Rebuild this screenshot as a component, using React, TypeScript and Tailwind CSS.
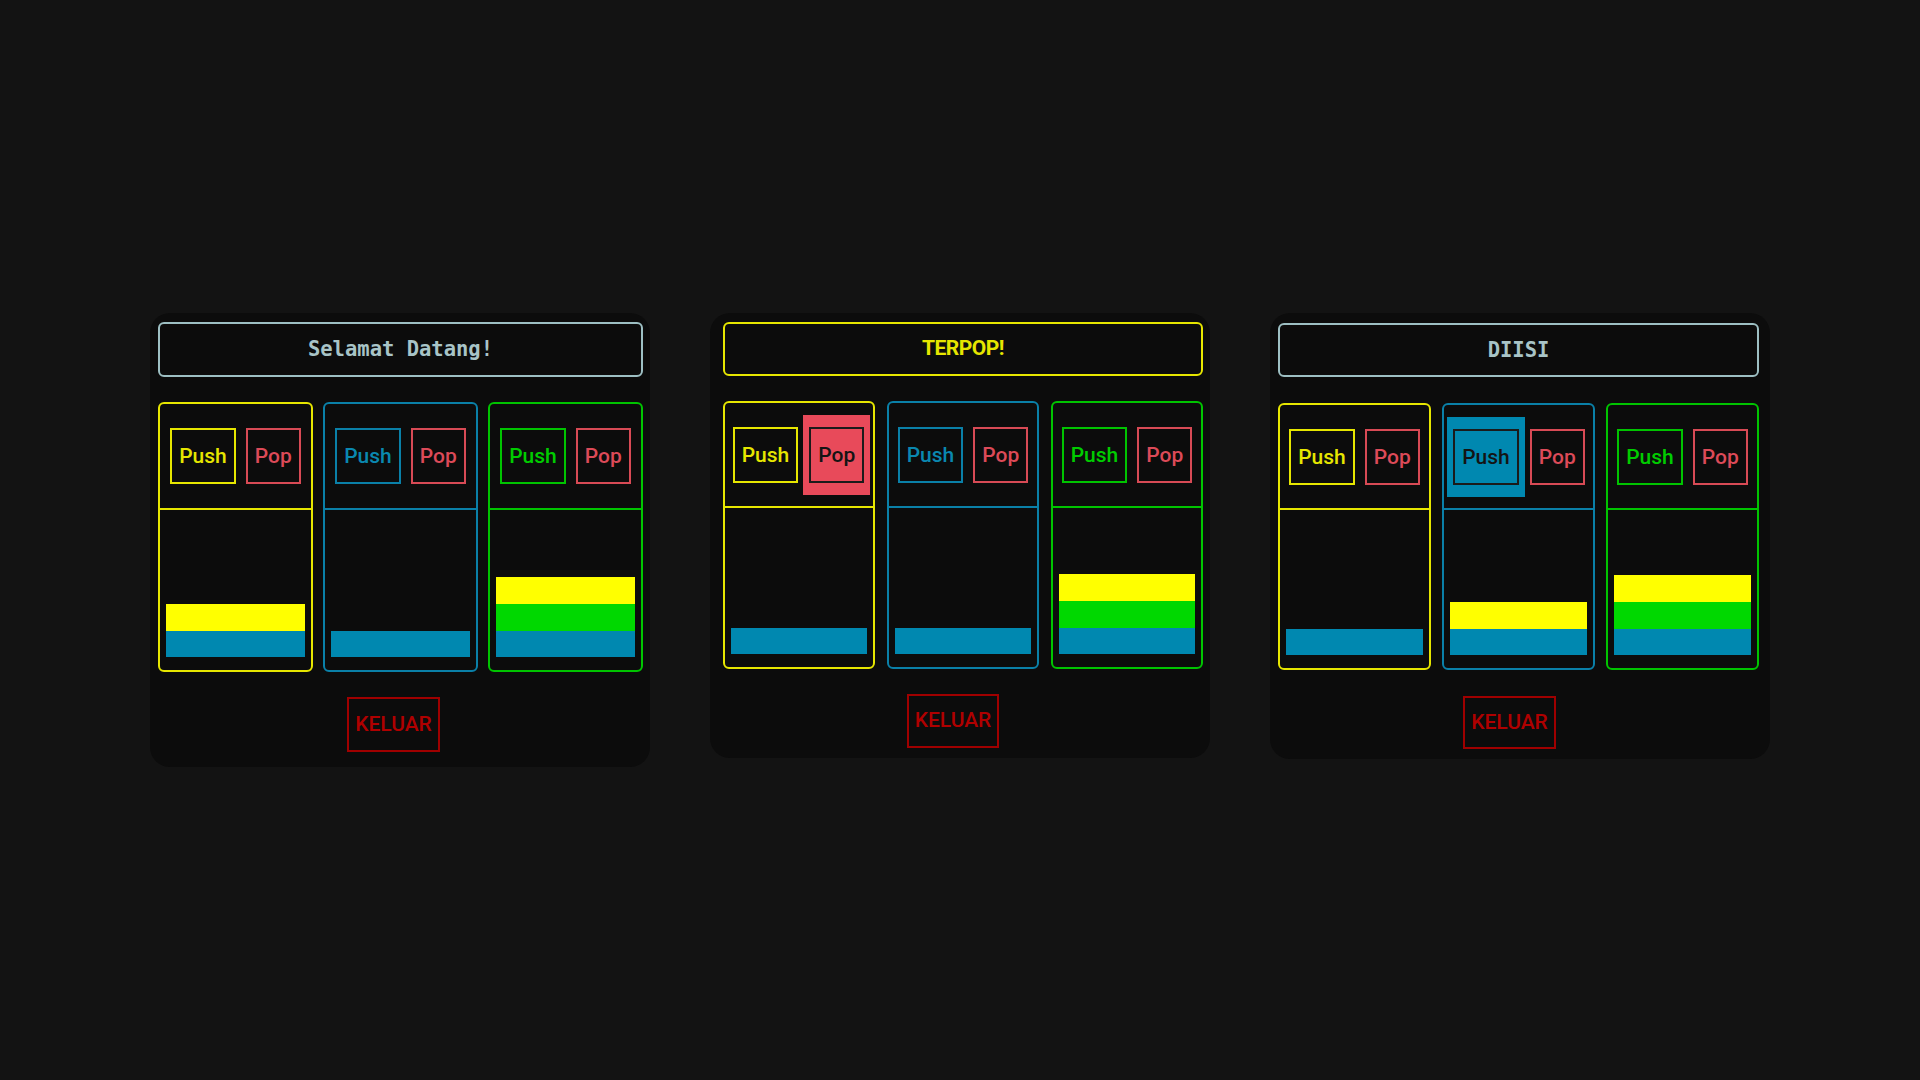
import React from "react";

type Tone = "yellow" | "blue" | "green";

type Column = {
  tone: Tone;
  stack: Tone[]; // top to bottom
  active?: "push" | "pop";
};

type Panel = {
  title: string;
  mono: boolean;
  cols: Column[];
  pad: string;
  top: string;
  width: string;
  gap: string;
  titleH: string;
  colsH: string;
  headH: string;
  btnRow: string;
};

const frame: Record<Tone, string> = {
  yellow: "border-[#e6e600]",
  blue: "border-[#0a80a8]",
  green: "border-[#00c400]",
};

const pushText: Record<Tone, string> = {
  yellow: "border-[#e6e600] text-[#e6e600]",
  blue: "border-[#0a80a8] text-[#0a88b0]",
  green: "border-[#00c400] text-[#00cc00]",
};

const activeBg: Record<Tone, string> = {
  yellow: "bg-[#e6e600]",
  blue: "bg-[#0088b0]",
  green: "bg-[#00c400]",
};

const block: Record<Tone, string> = {
  yellow: "bg-[#ffff00]",
  blue: "bg-[#0088b0]",
  green: "bg-[#00d800]",
};

const panels: Panel[] = [
  {
    title: "Selamat Datang!",
    mono: true,
    pad: "pl-[8px] pt-[9px] pb-[15px]",
    top: "mt-[25px]",
    width: "w-[485px]",
    gap: "gap-[10px]",
    titleH: "h-[55px]",
    colsH: "h-[270px]",
    headH: "h-[106px]",
    btnRow: "mt-[25px] h-[55px] pr-[14px]",
    cols: [
      { tone: "yellow", stack: ["yellow", "blue"] },
      { tone: "blue", stack: ["blue"] },
      { tone: "green", stack: ["yellow", "green", "blue"] },
    ],
  },
  {
    title: "TERPOP!",
    mono: false,
    pad: "pl-[13px] pt-[9px] pb-[10px]",
    top: "mt-[25px]",
    width: "w-[480px]",
    gap: "gap-[12px]",
    titleH: "h-[54px]",
    colsH: "h-[268px]",
    headH: "h-[105px]",
    btnRow: "mt-[25px] h-[54px] pr-[20px]",
    cols: [
      { tone: "yellow", stack: ["blue"], active: "pop" },
      { tone: "blue", stack: ["blue"] },
      { tone: "green", stack: ["yellow", "green", "blue"] },
    ],
  },
  {
    title: "DIISI",
    mono: true,
    pad: "pl-[8px] pt-[10px] pb-[10px]",
    top: "mt-[26px]",
    width: "w-[481px]",
    gap: "gap-[11px]",
    titleH: "h-[54px]",
    colsH: "h-[267px]",
    headH: "h-[105px]",
    btnRow: "mt-[26px] h-[53px] pr-[18px]",
    cols: [
      { tone: "yellow", stack: ["blue"] },
      { tone: "blue", stack: ["yellow", "blue"], active: "push" },
      { tone: "green", stack: ["yellow", "green", "blue"] },
    ],
  },
];

const btnBase =
  "border-2 px-[7px] py-[12px] leading-[28px] text-[21px] font-medium";

function StackButton({
  label,
  color,
  bg,
  active,
}: {
  label: string;
  color: string;
  bg: string;
  active: boolean;
}) {
  if (active) {
    return (
      <div className={`${bg} px-[6px] py-[12px]`}>
        <div className={`${btnBase} border-[#1b1b1b] text-[#141414]`}>{label}</div>
      </div>
    );
  }
  return <div className={`${btnBase} ${color} mx-[5px]`}>{label}</div>;
}

function StackColumn({ col, headH }: { col: Column; headH: string }) {
  return (
    <div className={`flex flex-col rounded-[6px] border-2 ${frame[col.tone]}`}>
      <div className={`${headH} flex items-center justify-center border-b-2 ${frame[col.tone]}`}>
        <StackButton
          label="Push"
          color={pushText[col.tone]}
          bg={activeBg[col.tone]}
          active={col.active === "push"}
        />
        <StackButton
          label="Pop"
          color="border-[#d84a55] text-[#dc4a58]"
          bg="bg-[#e84a5a]"
          active={col.active === "pop"}
        />
      </div>
      <div className="flex flex-1 flex-col justify-end px-[6px] pb-[13px]">
        {col.stack.map((t, i) => (
          <div
            key={i}
            className={`${block[t]} ${i === col.stack.length - 1 ? "h-[26px]" : "h-[27px]"}`}
          />
        ))}
      </div>
    </div>
  );
}

function StackPanel({ p }: { p: Panel }) {
  return (
    <div className={`w-[500px] rounded-[20px] bg-[#0c0c0c] ${p.pad}`}>
      <div className={p.width}>
        {/* status bar */}
        <div
          className={`${p.titleH} flex items-center justify-center rounded-[6px] border-2 ${
            p.mono
              ? "border-[#9dbfc3] text-[#a8c4c7] font-['DejaVu_Sans_Mono',monospace] font-bold text-[20.5px]"
              : "border-[#e6e600] text-[#e6e600] font-bold text-[21px] tracking-[-0.5px]"
          }`}
        >
          {p.title}
        </div>

        <div className={`${p.top} ${p.colsH} grid grid-cols-3 ${p.gap}`}>
          {p.cols.map((c, i) => (
            <StackColumn key={i} col={c} headH={p.headH} />
          ))}
        </div>

        <div className={`${p.btnRow} flex justify-center`}>
          <div className="flex h-full items-center border-2 border-[#a00000] px-[6px] text-[21px] font-medium text-[#b00000]">
            KELUAR
          </div>
        </div>
      </div>
    </div>
  );
}

export default function App() {
  return (
    <div className="flex h-[1080px] w-[1920px] items-start justify-center gap-[60px] bg-[#131313] pt-[313px] font-['Roboto',sans-serif]">
      {panels.map((p, i) => (
        <StackPanel key={i} p={p} />
      ))}
    </div>
  );
}
